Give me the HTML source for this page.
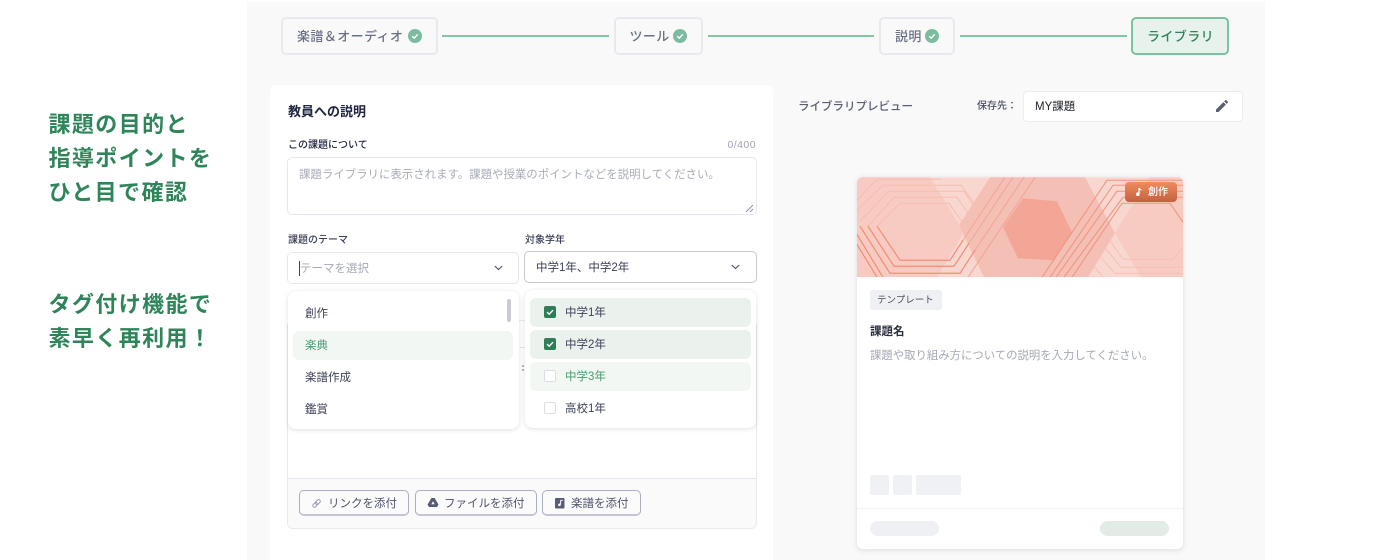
<!DOCTYPE html>
<html lang="ja"><head><meta charset="utf-8"><style>
*{box-sizing:border-box;margin:0;padding:0}
html,body{width:1400px;height:560px;overflow:hidden;background:#fff}
body{position:relative;font-family:"Liberation Sans","Noto Sans CJK JP",sans-serif;color:#3d4258}
.a{position:absolute}
.t{position:absolute;white-space:nowrap;line-height:16px;transform:translateY(1px)}
.head{position:absolute;left:48.5px;font-size:22px;font-weight:700;letter-spacing:1.4px;line-height:34px;color:#2e855a;white-space:nowrap}
.pill{position:absolute;top:17px;height:38px;border:2px solid #e8e9ef;border-radius:5px;background:#f9f9fa;font-size:13px;font-weight:500;letter-spacing:.4px;color:#6b7085;line-height:35px;white-space:nowrap}
.line{position:absolute;top:35px;height:2px;background:#82c4a6}
.item{position:absolute;font-size:11.5px;line-height:16px;white-space:nowrap;color:#3d4258;transform:translateY(1px)}
.row{position:absolute;height:29px;border-radius:6px}
.cb{position:absolute;left:544px;width:12px;height:12px;border-radius:2px}
.cb.off{background:#fff;border:1px solid #dcdde5}
.cb.on{background:#2e7f59}
.btn{position:absolute;top:490px;height:26px;border:1px solid #abadc1;border-bottom-width:2px;border-bottom-color:#c4c5d2;border-radius:5px;background:#fbfbfc}
</style></head><body>
<div class="head" style="top:108px">課題の目的と<br>指導ポイントを<br>ひと目で確認</div>
<div class="head" style="top:288px">タグ付け機能で<br>素早く再利用！</div>

<div class="a" style="left:247px;top:2px;width:1018px;height:558px;background:#f9f9fa"></div>

<div class="line" style="left:442px;width:167px"></div>
<div class="line" style="left:708px;width:166px"></div>
<div class="line" style="left:960px;width:167px"></div>
<div class="pill" style="left:281px;width:157px;padding-left:14px">楽譜＆オーディオ</div>
<div class="pill" style="left:614px;width:89px;padding-left:13.5px">ツール</div>
<div class="pill" style="left:879px;width:76px;padding-left:14px">説明</div>
<div class="pill" style="left:1131px;width:98px;padding-left:14px;border-color:#7cc2a1;background:#e6f2eb;color:#2e855a">ライブラリ</div>
<svg class="a" style="left:408px;top:29px" width="14" height="14" viewBox="0 0 14 14"><circle cx="7" cy="7" r="7" fill="#7dbba0"/><path d="M4.2 7.2l2 1.9 3.6-3.8" fill="none" stroke="#fff" stroke-width="1.4"/></svg>
<svg class="a" style="left:673px;top:29px" width="14" height="14" viewBox="0 0 14 14"><circle cx="7" cy="7" r="7" fill="#7dbba0"/><path d="M4.2 7.2l2 1.9 3.6-3.8" fill="none" stroke="#fff" stroke-width="1.4"/></svg>
<svg class="a" style="left:925px;top:29px" width="14" height="14" viewBox="0 0 14 14"><circle cx="7" cy="7" r="7" fill="#7dbba0"/><path d="M4.2 7.2l2 1.9 3.6-3.8" fill="none" stroke="#fff" stroke-width="1.4"/></svg>

<div class="a" style="left:270px;top:85px;width:503px;height:475px;background:#fff;border-radius:6px 6px 0 0"></div>
<div class="t" style="left:288px;top:103px;font-size:13px;font-weight:700;color:#1f2440">教員への説明</div>
<div class="t" style="left:288px;top:136.5px;font-size:10px;font-weight:500;color:#1f2440">この課題について</div>
<div class="t" style="right:644px;top:136px;font-size:10.5px;color:#a0a3b1;letter-spacing:.45px">0/400</div>
<div class="a" style="left:287px;top:157px;width:470px;height:58px;border:1px solid #e6e7ee;border-radius:5px"></div>
<div class="t" style="left:299px;top:166px;font-size:11.43px;color:#a9acb9">課題ライブラリに表示されます。課題や授業のポイントなどを説明してください。</div>
<svg class="a" style="left:745px;top:204px" width="9" height="9" viewBox="0 0 9 9"><path d="M1 8L8 1M5 8L8 5" stroke="#8f92a3" stroke-width="1" fill="none"/></svg>

<div class="t" style="left:288px;top:231.5px;font-size:10px;font-weight:500;color:#3a3f58">課題のテーマ</div>
<div class="t" style="left:525px;top:231.5px;font-size:10px;font-weight:500;color:#3a3f58">対象学年</div>
<div class="a" style="left:287px;top:252px;width:232px;height:32px;border:1px solid #e6e7ee;border-radius:5px;background:#fff"></div>
<div class="a" style="left:299px;top:261px;width:1px;height:15px;background:#3d4258"></div>
<div class="item" style="left:300px;top:260px;color:#a5a8b6">テーマを選択</div>
<svg class="a" style="left:494px;top:265px" width="9" height="6" viewBox="0 0 9 6"><path d="M.8 1l3.7 3.6L8.2 1" fill="none" stroke="#565b70" stroke-width="1.2"/></svg>
<div class="a" style="left:524px;top:251px;width:233px;height:32px;border:1px solid #c8c9d6;border-radius:5px;background:#fff"></div>
<div class="item" style="left:536px;top:259px;color:#3a3f58">中学1年、中学2年</div>
<svg class="a" style="left:731px;top:264px" width="9" height="6" viewBox="0 0 9 6"><path d="M.8 1l3.7 3.6L8.2 1" fill="none" stroke="#565b70" stroke-width="1.2"/></svg>

<div class="a" style="left:287px;top:320px;width:470px;height:208.5px;border:1px solid #e8e9ef;border-radius:6px;background:#fff;overflow:hidden">
<div class="a" style="left:0;top:157px;width:470px;height:52px;background:#fafafb;border-top:1px solid #e6e7ee"></div></div>
<div class="a" style="left:520px;top:347px;width:5px;height:1px;background:#e6e7ee"></div>
<div class="a" style="left:522px;top:365px;width:2px;height:2px;background:#b5b7c4"></div>
<div class="a" style="left:522px;top:369px;width:2px;height:2px;background:#b5b7c4"></div>

<div class="a" style="left:287.5px;top:290.5px;width:231px;height:138px;background:#fff;border-radius:8px;box-shadow:0 1px 5px rgba(40,44,70,.15)"></div>
<div class="a" style="left:507px;top:299px;width:4px;height:23px;background:#cbccd2;border-radius:2px"></div>
<div class="item" style="left:305px;top:305px">創作</div>
<div class="row" style="left:293px;top:331px;width:220px;background:#f2f7f4"></div>
<div class="item" style="left:305px;top:337px;color:#4a9a72">楽典</div>
<div class="item" style="left:305px;top:369px">楽譜作成</div>
<div class="item" style="left:305px;top:401px">鑑賞</div>

<div class="a" style="left:525px;top:289.5px;width:231px;height:138px;background:#fff;border-radius:8px;box-shadow:0 1px 5px rgba(40,44,70,.15)"></div>
<div class="row" style="left:530px;top:298px;width:221px;background:#ebf2ee"></div>
<div class="row" style="left:530px;top:330px;width:221px;background:#ebf2ee"></div>
<div class="row" style="left:530px;top:362px;width:221px;background:#f2f7f4"></div>
<div class="cb on" style="top:306px"><svg style="display:block" width="12" height="12" viewBox="0 0 12 12"><path d="M3 6.2l2.2 2 3.8-4" fill="none" stroke="#fff" stroke-width="1.4"/></svg></div>
<div class="cb on" style="top:338px"><svg style="display:block" width="12" height="12" viewBox="0 0 12 12"><path d="M3 6.2l2.2 2 3.8-4" fill="none" stroke="#fff" stroke-width="1.4"/></svg></div>
<div class="cb off" style="top:370px"></div>
<div class="cb off" style="top:402px"></div>
<div class="item" style="left:565px;top:304px">中学1年</div>
<div class="item" style="left:565px;top:336px">中学2年</div>
<div class="item" style="left:565px;top:368px;color:#4a9a72">中学3年</div>
<div class="item" style="left:565px;top:400px">高校1年</div>

<div class="btn" style="left:299px;width:110px"></div>
<div class="btn" style="left:415px;width:122px"></div>
<div class="btn" style="left:542px;width:99px"></div>
<svg class="a" style="left:311px;top:498px" width="11" height="11" viewBox="0 0 11 11"><g fill="none" stroke="#8f92a4" stroke-width=".8" transform="rotate(-45 5.5 5.5)"><rect x="0.8" y="3.8" width="5.5" height="3.4" rx="1.7"/><rect x="4.7" y="3.8" width="5.5" height="3.4" rx="1.7"/></g></svg>
<div class="item" style="left:328px;top:495px;color:#4f5369">リンクを添付</div>
<svg class="a" style="left:427px;top:497px" width="12" height="11" viewBox="0 0 12 11"><path d="M4.4 1h3.2l3.9 6.6L10 10H2L.5 7.6z" fill="#595d74"/><path d="M6 4.2L4.3 7.2h3.4z" fill="#fbfbfc"/></svg>
<div class="item" style="left:444px;top:495px;color:#4f5369">ファイルを添付</div>
<svg class="a" style="left:555px;top:498px" width="10" height="11" viewBox="0 0 10 11"><rect width="9.5" height="10.5" rx="1" fill="#595d74"/><path d="M5.6 2.4v4M5.6 2.4h2" stroke="#fbfbfc" stroke-width="1" fill="none"/><circle cx="4.4" cy="6.8" r="1.3" fill="#fbfbfc"/></svg>
<div class="item" style="left:571px;top:495px;color:#4f5369">楽譜を添付</div>

<div class="t" style="left:798px;top:98px;font-size:11.5px;font-weight:500;color:#5a5e72">ライブラリプレビュー</div>
<div class="t" style="left:977px;top:98px;font-size:10px;font-weight:500;color:#4a4e62">保存先：</div>
<div class="a" style="left:1023px;top:91px;width:220px;height:31px;background:#fff;border:1px solid #ecedf2;border-radius:4px"></div>
<div class="t" style="left:1035px;top:98px;font-size:11.5px;color:#22252f">MY課題</div>
<svg class="a" style="left:1216px;top:100px" width="12" height="12" viewBox="0 0 12 12"><path d="M0 9.5V12h2.5l7.4-7.4-2.5-2.5zM11.8 2.7a.7.7 0 000-1L10.3.2a.7.7 0 00-1 0L8.1 1.4l2.5 2.5z" fill="#5b5f72"/></svg>

<div class="a" style="left:857px;top:176.5px;width:326px;height:372.5px;background:#fff;border-radius:6px;box-shadow:0 1px 6px rgba(40,44,70,.14);overflow:hidden">
<svg style="position:absolute;left:0;top:0" width="326" height="100.5" viewBox="0 0 326 100">
<rect width="326" height="100" fill="#f8d7d1"/>
<polygon points="0,0 73,0 107,55 80,100 0,100" fill="#f8cbc2"/>
<polygon points="258,56 292,0 326,0 326,100 284,100" fill="#f8cbc2"/>
<polygon points="133,0 228,0 258,56 231,100 127,100 102,48" fill="#f4bfb5"/>
<polygon points="166,21 200,24 215,55 196,83 161,81 146,50" fill="#f3a696"/>
<g fill="none" stroke="#f6bdb0" stroke-width="1">
<path d="M20 49L43 26H92L113 56"/>
<path d="M11 49L37 20H100L118 46"/>
<path d="M3 44L32 14H107L124 40"/>
<path d="M-3 36L26 8H104L120 30"/>
<path d="M-3 26L20 2H84"/>
</g>
<g fill="none" stroke="#f28d75" stroke-width="1.2">
<path d="M20 49L43 83H93L106 63"/>
<path d="M11 49L37 89H97L112 66"/>
<path d="M3 49L33 96H103L118 73"/>
<path d="M-2 54L26 100"/><path d="M-2 64L20 100"/>
</g>
<g fill="none" stroke="#f3a694" stroke-width="1.1">
<path d="M106 63L148 0"/><path d="M112 66L156 0"/><path d="M118 73L167 0"/><path d="M111 100L178 0"/>
</g>
<g fill="none" stroke="#f1957f" stroke-width="1.1">
<path d="M185 100L250 3H326"/><path d="M193 100L256 8H326"/><path d="M199 100L260 14H326"/><path d="M207 100L266 20H326"/><path d="M215 100L265 26H313L326 45"/>
</g>
<g fill="none" stroke="#f5c0b4" stroke-width="1">
<path d="M252 62L266 82H316L326 70"/><path d="M246 68L264 90H326"/><path d="M240 76L258 96H326"/><path d="M236 88L246 100"/>
</g>
</svg>
<div class="a" style="left:268px;top:5.5px;width:52px;height:20px;border-radius:4px;background:linear-gradient(180deg,#ee8d5e,#c65f40)"></div>
<svg class="a" style="left:278px;top:10.5px" width="8" height="10" viewBox="0 0 8 10"><path d="M4 1v6" stroke="#fff" stroke-width="1.2"/><path d="M4 1c.4 1.4 1.6 1.6 2.4 2" stroke="#fff" stroke-width="1.2" fill="none"/><circle cx="2.8" cy="7.2" r="1.8" fill="#fff"/></svg>
<div class="t" style="left:291px;top:7px;font-size:10px;font-weight:500;color:#fff">創作</div>
<div class="a" style="left:13px;top:113.5px;width:72px;height:20px;border-radius:3px;background:#eff0f4"></div>
<div class="t" style="left:20px;top:115.5px;font-size:9.5px;color:#4b4f62">テンプレート</div>
<div class="t" style="left:13px;top:146.5px;font-size:11.5px;font-weight:700;color:#2a2d3e">課題名</div>
<div class="t" style="left:13px;top:170.5px;font-size:11.38px;color:#a5a8b6">課題や取り組み方についての説明を入力してください。</div>
<div class="a" style="left:13px;top:298.5px;width:19px;height:20px;border-radius:2px;background:#f0f1f5"></div>
<div class="a" style="left:36px;top:298.5px;width:19px;height:20px;border-radius:2px;background:#f0f1f5"></div>
<div class="a" style="left:59px;top:298.5px;width:45px;height:20px;border-radius:2px;background:#f0f1f5"></div>
<div class="a" style="left:0;top:331.5px;width:326px;height:1px;background:#f1f2f4"></div>
<div class="a" style="left:13px;top:344.5px;width:69px;height:15px;border-radius:8px;background:#eff0f4"></div>
<div class="a" style="left:243px;top:344.5px;width:69px;height:15px;border-radius:8px;background:#e2ece7"></div>
</div>
</body></html>
